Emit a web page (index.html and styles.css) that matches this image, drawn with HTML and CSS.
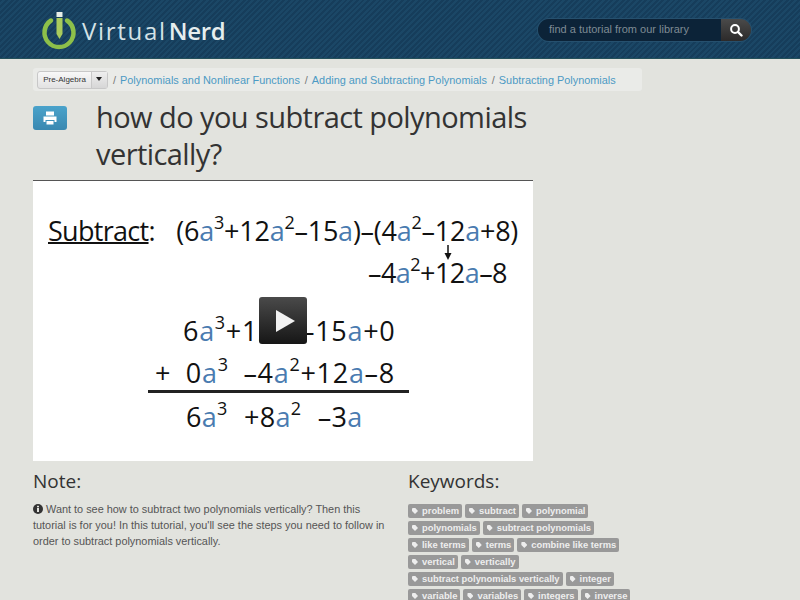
FILE: index.html
```html
<!DOCTYPE html>
<html lang="en">
<head>
    <meta charset="UTF-8">
    <meta name="viewport" content="width=device-width, initial-scale=1.0">
    <title>how do you subtract polynomials vertically?</title>
    <link rel="stylesheet" href="styles.css">
</head>
<body>
    <header class="topbar">
        <div class="logo">
            <svg class="logo-icon" width="36" height="40" viewBox="0 0 36 40">
                <path d="M10 9.5 A14.5 14.5 0 1 0 26 9.5" fill="none" stroke="#8dc04a" stroke-width="4.5" stroke-linecap="round"/>
                <rect x="15.5" y="1" width="6" height="5" fill="#e8eee8"/>
                <path d="M15.5 7 H21.5 V23 L18.5 28 L15.5 23 Z" fill="#a9cb5c"/>
            </svg>
            <span class="logo-text">Virtual<b>Nerd</b></span>
        </div>
        <form class="search">
            <span class="search-input">find a tutorial from our library</span>
            <span class="search-btn">
                <svg width="14" height="14" viewBox="0 0 14 14">
                    <circle cx="6" cy="6" r="3.9" fill="none" stroke="#fff" stroke-width="2"/>
                    <path d="M9 9 L12.5 12.5" stroke="#fff" stroke-width="2.4" stroke-linecap="round"/>
                </svg>
            </span>
        </form>
    </header>

    <main class="content">
        <nav class="crumbs">
            <span class="subject"><span class="subject-name">Pre-Algebra</span><span class="subject-caret"></span></span>
            <span class="sep">/</span><a>Polynomials and Nonlinear Functions</a>
            <span class="sep">/</span><a>Adding and Subtracting Polynomials</a>
            <span class="sep">/</span><a>Subtracting Polynomials</a>
        </nav>

        <div class="title-row">
            <span class="print-btn">
                <svg width="16" height="14" viewBox="0 0 16 14">
                    <path d="M4 0.5 H12 V4.5 H4 Z M1.5 5.5 H14.5 V11 H12.5 V9 H3.5 V11 H1.5 Z M4.5 10 H11.5 V13.5 H4.5 Z" fill="#fff"/>
                </svg>
            </span>
            <h1>how do you subtract polynomials vertically?</h1>
        </div>

        <div class="video">
            <div class="math m1"><span class="underlined">Subtract</span><span class="colon">:</span>(6<i>a</i><sup>3</sup>+12<i>a</i><sup>2</sup>–15<i>a</i>)–(4<i>a</i><sup>2</sup>–12<i>a</i>+8)</div>
            <div class="math m2">–4<i>a</i><sup>2</sup>+12<i>a</i>–8</div>
            <div class="math m3">6<i>a</i><sup>3</sup>+12<i>a</i><sup>2</sup>–15<i>a</i>+0</div>
            <div class="math m4">+ 0<i>a</i><sup>3</sup> –4<i>a</i><sup>2</sup>+12<i>a</i>–8</div>
            <div class="math-rule"></div>
            <div class="math m5">6<i>a</i><sup>3</sup> +8<i>a</i><sup>2</sup> –3<i>a</i></div>
            <svg class="arrow" width="8" height="16" viewBox="0 0 8 16">
                <path d="M4 0 V9" stroke="#111" stroke-width="1.5"/>
                <path d="M0.5 8 H7.5 L4 15 Z" fill="#111"/>
            </svg>
            <span class="play"><span class="play-tri"></span></span>
        </div>

        <div class="lower">
            <section class="note">
                <h2>Note:</h2>
                <p>
                    <svg class="info" width="10" height="10" viewBox="0 0 10 10">
                        <circle cx="5" cy="5" r="5" fill="#333"/>
                        <rect x="4" y="4" width="2" height="4" fill="#e2e3de"/>
                        <rect x="4" y="1.8" width="2" height="1.5" fill="#e2e3de"/>
                    </svg>
                    Want to see how to subtract two polynomials vertically? Then this tutorial is for you! In this tutorial, you'll see the steps you need to follow in order to subtract polynomials vertically.
                </p>
            </section>
            <section class="keywords">
                <h2>Keywords:</h2>
                <div class="tags">
                    <span class="tag">problem</span>
                    <span class="tag">subtract</span>
                    <span class="tag">polynomial</span>
                    <span class="tag">polynomials</span>
                    <span class="tag">subtract polynomials</span>
                    <span class="tag">like terms</span>
                    <span class="tag">terms</span>
                    <span class="tag">combine like terms</span>
                    <span class="tag">vertical</span>
                    <span class="tag">vertically</span>
                    <span class="tag">subtract polynomials vertically</span>
                    <span class="tag">integer</span>
                    <span class="tag">variable</span>
                    <span class="tag">variables</span>
                    <span class="tag">integers</span>
                    <span class="tag">inverse</span>
                </div>
            </section>
        </div>
    </main>
</body>
</html>
```
FILE: styles.css
```css
* {
    margin: 0;
    padding: 0;
    box-sizing: border-box;
}

html, body {
    height: 600px;
    overflow: hidden;
}

body {
    background-color: #e2e3de;
    color: #333;
    font-family: "Liberation Sans", Arial, sans-serif;
}

/* top bar */
.topbar {
    height: 59px;
    display: flex;
    align-items: center;
    justify-content: space-between;
    padding: 0 49px 0 41px;
    background-color: #17405f;
    background-image: repeating-linear-gradient(135deg, #163d5b 0, #163d5b 2px, #1b4766 2px, #1b4766 4px);
    border-bottom: 1px solid #24505a;
}

.logo {
    display: flex;
    align-items: center;
    gap: 5px;
    margin-top: 2px;
}

.logo-icon {
    display: block;
    margin-top: 1px;
}

.logo-text {
    font-family: "Open Sans", sans-serif;
    font-size: 24px;
    letter-spacing: 1.7px;
    color: #d5e2e6;
}

.logo-text b {
    font-weight: 600;
    margin-left: 2px;
    letter-spacing: -0.3px;
    color: #e6eeee;
}

.search {
    display: flex;
    width: 213px;
    height: 22px;
    margin-top: 2px;
    border-radius: 12px;
    overflow: hidden;
    box-shadow: 0 0 0 1px #26506e;
}

.search-input {
    flex: 1;
    background-color: #0c2338;
    color: #7f8b94;
    font-size: 11px;
    line-height: 21px;
    padding-left: 11px;
}

.search-btn {
    width: 30px;
    display: flex;
    align-items: center;
    justify-content: center;
    background: linear-gradient(to bottom, #4a4a4a, #2c2a2a);
}

/* main column */
.content {
    padding: 9px 0 0 33px;
}

.crumbs {
    width: 609px;
    height: 23px;
    margin-bottom: 7px;
    padding-left: 4px;
    display: flex;
    align-items: center;
    background-color: #eaebe8;
    border-radius: 3px;
    font-size: 10.9px;
    color: #4c9ac4;
    white-space: nowrap;
}

.subject {
    display: flex;
    width: 71px;
    height: 18px;
    background: linear-gradient(to bottom, #f8f8f8, #e2e2e2);
    border: 1px solid #c8c8c8;
    border-radius: 3px;
    margin-right: 5px;
}

.subject-name {
    flex: 1;
    font-size: 8px;
    line-height: 16px;
    color: #333;
    text-align: center;
    border-right: 1px solid #c8c8c8;
}

.subject-caret {
    width: 15px;
    background: linear-gradient(to bottom, #eee, #d6d6d6);
    position: relative;
}

.subject-caret::after {
    content: "";
    position: absolute;
    left: 4px;
    top: 5px;
    border: 3px solid transparent;
    border-top: 4px solid #222;
}

.sep {
    color: #777;
    margin-right: 4px;
}

.crumbs a {
    margin-right: 5px;
}

.title-row {
    display: flex;
    align-items: flex-start;
}

.print-btn {
    width: 34px;
    height: 24px;
    margin-top: 8px;
    margin-right: 29px;
    display: flex;
    align-items: center;
    justify-content: center;
    border-radius: 3px;
    background: linear-gradient(to bottom, #4aa3cb, #3a88b0);
}

h1 {
    width: 440px;
    font-family: "Open Sans", sans-serif;
    font-weight: 400;
    font-size: 29px;
    letter-spacing: -0.57px;
    line-height: 37px;
    color: #333;
}

/* video still */
.video {
    position: relative;
    width: 500px;
    height: 281px;
    margin-top: 8px;
    background-color: #fff;
    border-top: 1px solid #555;
    overflow: hidden;
}

.math {
    font-family: "Open Sans", sans-serif;
    font-weight: 500;
    font-size: 27px;
    line-height: 42px;
    color: #111;
    white-space: nowrap;
}

.math i {
    font-style: normal;
    color: #4a7bb0;
}

.math sup {
    font-size: 18px;
    line-height: 0;
    vertical-align: 12px;
}

.m1 { margin: 29px 0 0 15px; letter-spacing: -0.25px; }
.m2 { margin: 0 0 0 335px; letter-spacing: -0.55px; }
.m3 { margin: 16px 0 0 150px; letter-spacing: 0.7px; }
.m4 { margin: 0 0 -4px 122px; letter-spacing: 0.7px; word-spacing: 7px; }
.m5 { margin: 3px 0 0 153px; letter-spacing: 0.3px; word-spacing: 9px; }

.underlined {
    letter-spacing: -0.7px;
    text-decoration: underline;
    text-decoration-thickness: 2px;
}

.colon {
    margin-right: 21px;
}

.math-rule {
    width: 261px;
    height: 3px;
    margin: 0 0 0 115px;
    background-color: #222;
}

.arrow {
    position: absolute;
    left: 411px;
    top: 64px;
}

.play {
    position: absolute;
    left: 226px;
    top: 116px;
    width: 48px;
    height: 47px;
    display: flex;
    align-items: center;
    justify-content: center;
    border-radius: 3px;
    background: linear-gradient(to bottom, #4a4a4a, #161616);
}

.play-tri {
    width: 0;
    height: 0;
    margin-left: 4px;
    border-left: 19px solid #f2f2f2;
    border-top: 11px solid transparent;
    border-bottom: 11px solid transparent;
}

/* note + keywords */
.lower {
    display: flex;
    margin-top: 7px;
}

h2 {
    font-family: "Open Sans", sans-serif;
    font-weight: 400;
    font-size: 19px;
    line-height: 26px;
    color: #333;
}

.note {
    width: 375px;
}

.note p {
    width: 355px;
    margin-top: 7px;
    font-size: 10.9px;
    line-height: 16px;
    color: #555;
}

.info {
    vertical-align: -1px;
}

.keywords {
    width: 225px;
}

.tags {
    margin-top: 10px;
    display: flex;
    flex-wrap: wrap;
    gap: 3px;
}

.tag {
    height: 14px;
    padding: 0 3px 0 14px;
    position: relative;
    background-color: #999;
    border-radius: 2px;
    font-size: 9.4px;
    font-weight: bold;
    line-height: 14px;
    color: #eee;
    white-space: nowrap;
}

.tag::before {
    content: "";
    position: absolute;
    left: 4px;
    top: 4px;
    width: 6px;
    height: 6px;
    background-color: #eee;
    border-radius: 1px 0 0 0;
    clip-path: polygon(0 0, 55% 0, 100% 50%, 50% 100%, 0 50%);
}
```
